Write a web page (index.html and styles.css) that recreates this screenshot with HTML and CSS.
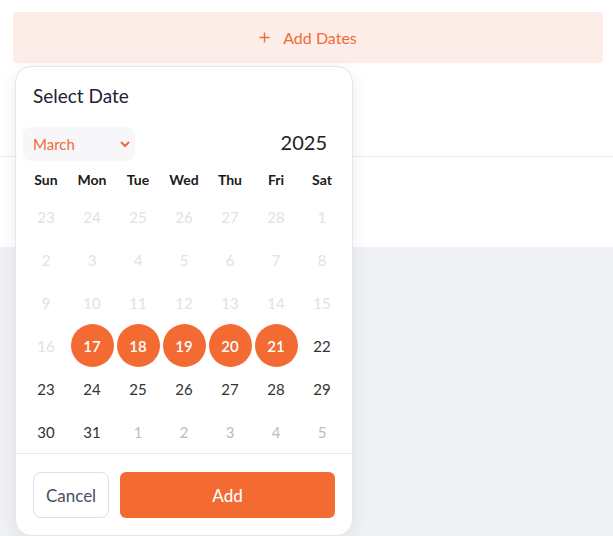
FILE: index.html
```html
<!DOCTYPE html>
<html lang="en">
<head>
    <meta charset="UTF-8">
    <meta name="viewport" content="width=device-width, initial-scale=1.0">
    <title>Select Date</title>
    <link rel="stylesheet" href="styles.css">
</head>
<body>
    <div class="top-section">
        <button class="add-dates-btn">
            <svg width="11" height="11" viewBox="0 0 11 11"><path d="M5.5 0.5 V10.5 M0.5 5.5 H10.5" stroke="#f26a35" stroke-width="1.4"/></svg>
            <span>Add Dates</span>
        </button>
    </div>
    <div class="middle-section"></div>
    <div class="page-rest"></div>

    <!-- date picker dropdown -->
    <div class="date-picker">
        <h3 class="picker-title">Select Date</h3>

        <div class="picker-header">
            <div class="month-select">
                <span>March</span>
                <svg width="10" height="7" viewBox="0 0 10 7"><path d="M1.5 1.5 L5 5 L8.5 1.5" fill="none" stroke="#f26a35" stroke-width="2" stroke-linecap="round" stroke-linejoin="round"/></svg>
            </div>
            <div class="year">2025</div>
        </div>

        <div class="weekdays">
            <div>Sun</div><div>Mon</div><div>Tue</div><div>Wed</div><div>Thu</div><div>Fri</div><div>Sat</div>
        </div>

        <div class="days">
            <div class="day disabled">23</div>
            <div class="day disabled">24</div>
            <div class="day disabled">25</div>
            <div class="day disabled">26</div>
            <div class="day disabled">27</div>
            <div class="day disabled">28</div>
            <div class="day disabled">1</div>

            <div class="day disabled">2</div>
            <div class="day disabled">3</div>
            <div class="day disabled">4</div>
            <div class="day disabled">5</div>
            <div class="day disabled">6</div>
            <div class="day disabled">7</div>
            <div class="day disabled">8</div>

            <div class="day disabled">9</div>
            <div class="day disabled">10</div>
            <div class="day disabled">11</div>
            <div class="day disabled">12</div>
            <div class="day disabled">13</div>
            <div class="day disabled">14</div>
            <div class="day disabled">15</div>

            <div class="day disabled">16</div>
            <div class="day selected"><span>17</span></div>
            <div class="day selected"><span>18</span></div>
            <div class="day selected"><span>19</span></div>
            <div class="day selected"><span>20</span></div>
            <div class="day selected"><span>21</span></div>
            <div class="day">22</div>

            <div class="day">23</div>
            <div class="day">24</div>
            <div class="day">25</div>
            <div class="day">26</div>
            <div class="day">27</div>
            <div class="day">28</div>
            <div class="day">29</div>

            <div class="day">30</div>
            <div class="day">31</div>
            <div class="day outside">1</div>
            <div class="day outside">2</div>
            <div class="day outside">3</div>
            <div class="day outside">4</div>
            <div class="day outside">5</div>
        </div>

        <div class="picker-footer">
            <button class="cancel-btn">Cancel</button>
            <button class="add-btn">Add</button>
        </div>
    </div>
</body>
</html>
```

FILE: styles.css
```css
body {
    font-family: Lato, "Noto Sans", sans-serif;
    margin: 0;
    background-color: #f0f1f5;
    position: relative;
    height: 536px;
    overflow: hidden;
}
.top-section {
    background-color: #fff;
    height: 157px;
    padding: 12px 10px 0 13px;
    box-sizing: border-box;
    border-bottom: 1px solid #ececec;
}
.add-dates-btn {
    width: 100%;
    height: 51px;
    border: none;
    border-radius: 4px;
    background-color: #fdede9;
    color: #f26a35;
    font-family: inherit;
    font-size: 16px;
    display: flex;
    align-items: center;
    justify-content: center;
    gap: 13px;
    padding: 0;
}
.add-dates-btn svg {
    margin-top: -1px;
}
.middle-section {
    background-color: #fff;
    height: 90px;
}

.date-picker {
    position: absolute;
    left: 15px;
    top: 66px;
    width: 338px;
    height: 470px;
    box-sizing: border-box;
    background-color: #fff;
    border: 1px solid #e6e6e6;
    border-radius: 16px;
    box-shadow: 0 4px 18px rgba(0,0,0,0.07);
    padding: 0 7px;
}
.picker-title {
    margin: 0;
    padding: 17px 0 0 10px;
    font-size: 19px;
    font-weight: 400;
    color: #1f2130;
    line-height: 24px;
}
.picker-header {
    display: flex;
    justify-content: space-between;
    align-items: center;
    margin-top: 19px;
}
.month-select {
    width: 112px;
    height: 34px;
    box-sizing: border-box;
    background-color: #f7f7fa;
    border-radius: 8px;
    padding: 0 5px 0 10px;
    display: flex;
    align-items: center;
    justify-content: space-between;
    color: #f26a35;
    font-size: 15px;
}
.year {
    font-size: 20px;
    color: #222;
    margin: 0 18px 4px 0;
}
.weekdays {
    display: grid;
    grid-template-columns: repeat(7, 46px);
    height: 32px;
    margin-top: 2px;
    align-items: center;
    text-align: center;
    font-size: 14px;
    font-weight: 700;
    color: #1a1a1a;
}
.days {
    display: grid;
    grid-template-columns: repeat(7, 46px);
    grid-auto-rows: 43px;
    border-bottom: 1px solid #e8e8e8;
    margin: 0 -7px;
    padding: 0 7px;
}
.day {
    display: flex;
    align-items: center;
    justify-content: center;
    font-size: 15px;
    color: #333;
}
.day.disabled {
    color: #e2e2e2;
}
.day.outside {
    color: #bdbdbd;
}
.day.selected span {
    width: 43px;
    height: 43px;
    border-radius: 50%;
    background-color: #f36a33;
    color: #fff;
    font-weight: 600;
    display: flex;
    align-items: center;
    justify-content: center;
}
.picker-footer {
    display: flex;
    gap: 11px;
    padding: 18px 10px 0 10px;
}
.cancel-btn {
    width: 76px;
    height: 46px;
    border: 1px solid #dcdfe6;
    border-radius: 8px;
    background-color: #fff;
    color: #4a5060;
    font-family: inherit;
    font-size: 17px;
    padding: 0;
}
.add-btn {
    flex: 1;
    height: 46px;
    border: none;
    border-radius: 6px;
    background-color: #f36a33;
    color: #fff;
    font-family: inherit;
    font-size: 17px;
    font-weight: 500;
}
```
